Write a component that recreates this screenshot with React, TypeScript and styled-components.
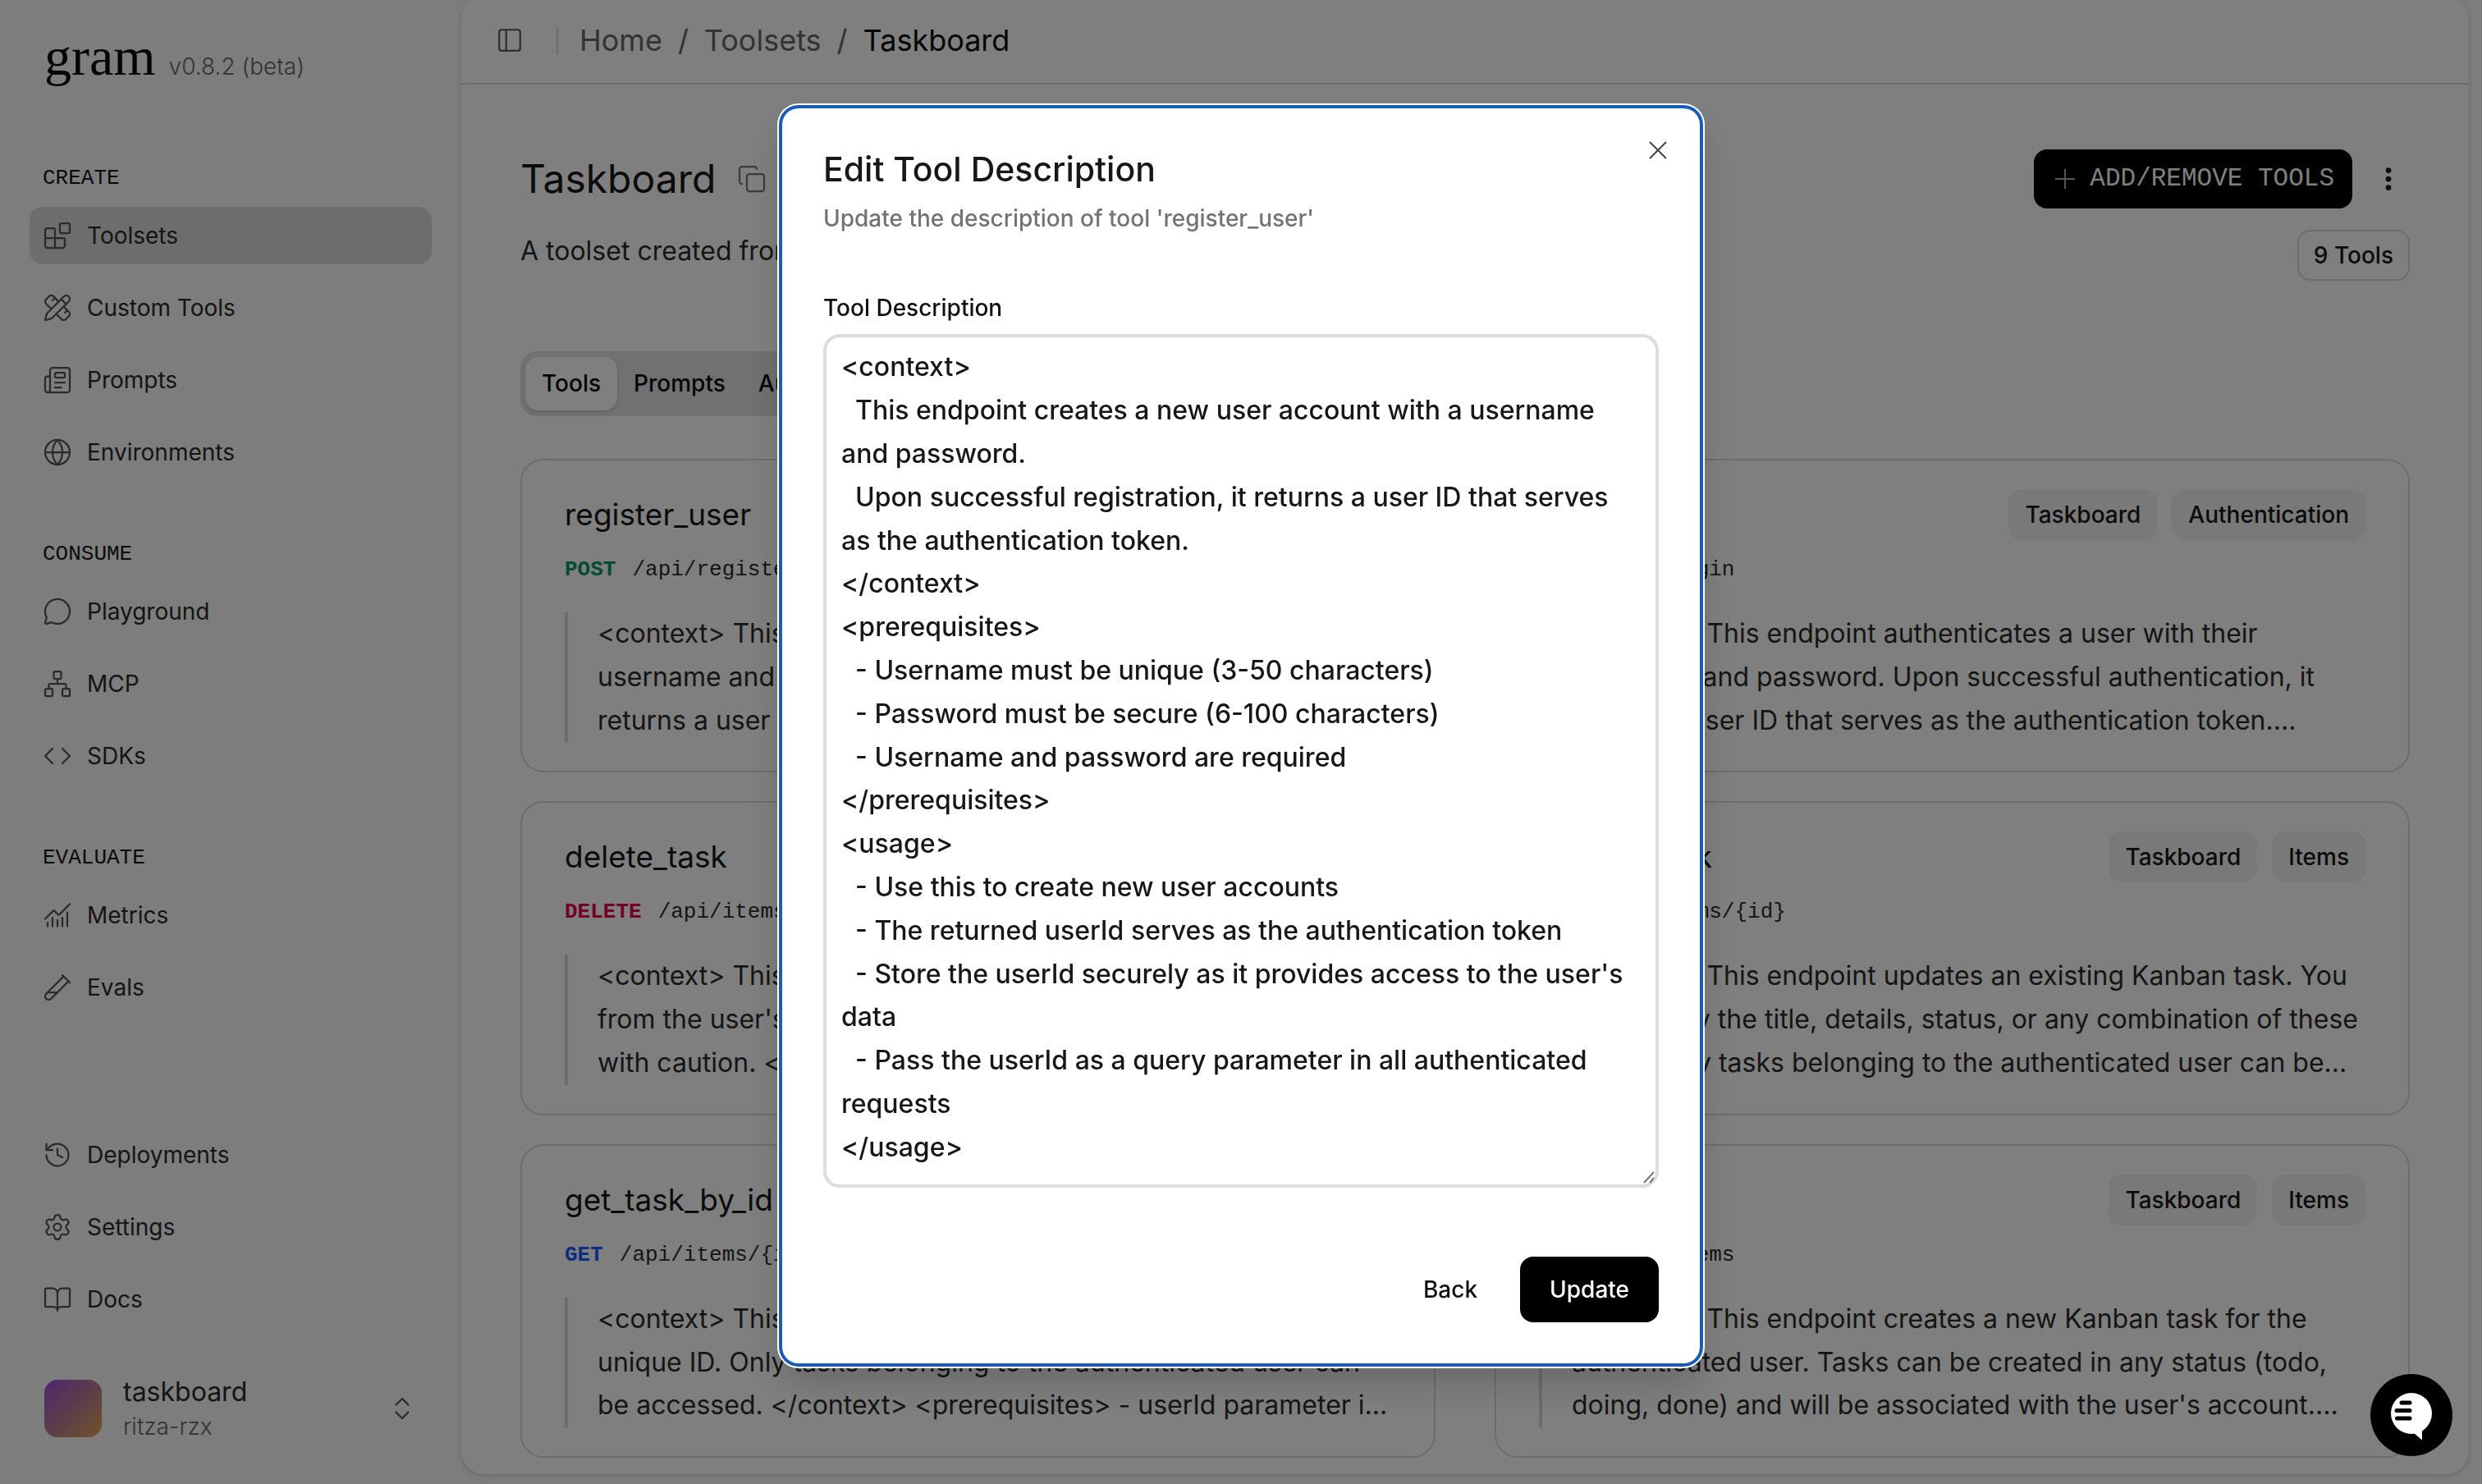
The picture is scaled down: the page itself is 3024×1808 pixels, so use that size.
import React from "react";
import styled, { createGlobalStyle } from "styled-components";
import {
  Blocks, PencilRuler, Newspaper, Globe, MessageCircle, Network, Code, ChartNoAxesCombined,
  TestTubeDiagonal, History, Settings, BookOpen, PanelLeft, Copy, ChevronsUpDown, EllipsisVertical,
} from "lucide-react";

const sans = `Inter, "Liberation Sans", sans-serif`;
const mono = `"Liberation Mono", monospace`;

const Global = createGlobalStyle`
  * { box-sizing: border-box; }
  html, body { margin: 0; height: 100%; overflow: hidden; }
  body { background: #fafafa; color: #171717; font-family: ${sans}; font-size: 28px; }
  #root { height: 100%; }
  h1, h2, h3, p, ul, dl { margin: 0; padding: 0; font-weight: 400; }
  ul { list-style: none; }
  button { font: inherit; color: inherit; border: 0; background: none; padding: 0; cursor: pointer; }
  a { color: inherit; text-decoration: none; }
`;

const Shell = styled.div`
  display: flex;
  height: 100vh;
`;

const Sidebar = styled.aside`
  display: flex;
  flex-direction: column;
  flex: 0 0 562px;
  padding: 30px 36px 50px;
  background: #fafafa;
`;

const Brand = styled.div`
  display: flex;
  align-items: baseline;
  gap: 16px;
  height: 148px;
  padding-left: 18px;
`;

const Logo = styled.span`
  font: 400 66px/78px "Liberation Serif", serif;
  color: #0a0a0a;
`;

const Version = styled.span`
  color: #666;
  font-weight: 300;
`;

const NavGroup = styled.section`
  display: flex;
  flex-direction: column;
  margin-bottom: 50px;
`;

const NavHeading = styled.h2`
  padding: 4px 16px 0;
  font: 400 26px/70px ${mono};
  color: #171717;
`;

const NavList = styled.ul`
  display: flex;
  flex-direction: column;
  gap: 18px;
`;

const NavLink = styled.a<{ $active?: boolean }>`
  display: flex;
  align-items: center;
  gap: 18px;
  height: 70px;
  padding: 0 16px;
  border-radius: 16px;
  background: ${(p) => (p.$active ? "#dadada" : "transparent")};
  color: #2b2b2b;
  svg { color: #555; flex: none; }
`;

const FooterNav = styled.nav`
  margin-top: auto;
`;

const Account = styled.button`
  display: flex;
  align-items: center;
  gap: 26px;
  margin-top: 56px;
  padding: 0 18px;
  text-align: left;
  svg { color: #555; margin-left: auto; }
`;

const Avatar = styled.span`
  width: 70px;
  height: 70px;
  border-radius: 16px;
  background: linear-gradient(135deg, #9b4fd8, #b98090 55%, #e5a550);
`;

const AccountText = styled.span`
  display: flex;
  flex-direction: column;
`;

const AccountName = styled.span`
  font-size: 32px;
  line-height: 44px;
  color: #2b2b2b;
`;

const AccountOrg = styled.span`
  line-height: 40px;
  font-weight: 300;
  color: #666;
`;

const Panel = styled.main`
  flex: 1;
  min-width: 0;
  margin: -4px 16px 12px 0;
  border-radius: 28px;
  background: #fff;
  box-shadow: 0 2px 6px rgba(0, 0, 0, 0.16);
  overflow: hidden;
`;

const TopBar = styled.header`
  display: flex;
  align-items: center;
  height: 107px;
  padding: 0 42px;
  border-bottom: 2px solid #d9d9d9;
  svg { color: #555; }
`;

const Rule = styled.span`
  width: 2px;
  height: 34px;
  margin: 0 26px 0 40px;
  background: #d9d9d9;
`;

const Crumbs = styled.nav`
  display: flex;
  gap: 19px;
  font-size: 36px;
  line-height: 48px;
  color: #666;
`;

const CurrentCrumb = styled.span`
  color: #0a0a0a;
`;

const IconButton = styled.button<{ $size: number }>`
  display: flex;
  align-items: center;
  justify-content: center;
  width: ${(p) => p.$size}px;
  height: ${(p) => p.$size}px;
`;

const Content = styled.div`
  padding: 79px 72px 0;
`;

const TitleRow = styled.div`
  display: flex;
  align-items: center;
  justify-content: space-between;
  height: 72px;
`;

const TitleGroup = styled.div`
  display: flex;
  align-items: center;
  gap: 26px;
  svg { color: #777; }
`;

const Title = styled.h1`
  font-size: 48px;
  line-height: 72px;
`;

const Actions = styled.div`
  display: flex;
  align-items: center;
  gap: 18px;
`;

const AddButton = styled.button`
  display: flex;
  align-items: center;
  gap: 18px;
  height: 72px;
  padding: 0 22px 0 26px;
  border-radius: 16px;
  background: #000;
  color: #fff;
  font: 400 31px/40px ${mono};
  svg { color: #aaa; }
`;

const SubRow = styled.div`
  display: flex;
  align-items: flex-start;
  justify-content: space-between;
  margin-top: 26px;
  height: 148px;
`;

const Summary = styled.p`
  font-size: 32px;
  line-height: 52px;
  color: #2b2b2b;
`;

const Badge = styled.span<{ $outline?: boolean }>`
  padding: 0 18px;
  border: 2px solid ${(p) => (p.$outline ? "#d9d9d9" : "#f2f2f2")};
  border-radius: 16px;
  background: ${(p) => (p.$outline ? "#fff" : "#f2f2f2")};
  color: #171717;
  font-weight: 500;
  line-height: 58px;
`;

const Tabs = styled.div`
  display: inline-flex;
  padding: 7px 6px;
  border-radius: 20px;
  background: #e2e2e2;
`;

const Tab = styled.button<{ $active?: boolean }>`
  padding: 0 20px;
  border-radius: 16px;
  background: ${(p) => (p.$active ? "#fff" : "transparent")};
  box-shadow: ${(p) => (p.$active ? "0 2px 4px rgba(0, 0, 0, 0.15)" : "none")};
  color: #0a0a0a;
  font-weight: 500;
  line-height: 65px;
`;

const CardGrid = styled.div`
  display: grid;
  grid-template-columns: 1fr 1fr;
  gap: 35px 72px;
  margin-top: 52px;
`;

const Card = styled.article`
  min-width: 0;
  padding: 35px 52px;
  border: 2px solid #d9d9d9;
  border-radius: 28px;
`;

const CardHead = styled.div`
  display: flex;
  justify-content: space-between;
`;

const CardTitle = styled.h3`
  font-size: 37px;
  line-height: 62px;
`;

const BadgeRow = styled.div`
  display: flex;
  gap: 18px;
`;

const Endpoint = styled.p`
  display: flex;
  gap: 20px;
  margin: 15px 0 31px;
  font: 400 26px/42px ${mono};
  color: #2b2b2b;
`;

const Method = styled.span<{ $color: string }>`
  font-weight: 700;
  color: ${(p) => p.$color};
`;

const Quote = styled.div`
  padding-left: 36px;
  border-left: 4px solid #d9d9d9;
`;

const QuoteText = styled.p`
  white-space: pre-line;
  font-size: 32px;
  line-height: 1.65;
  color: #2b2b2b;
`;

const Overlay = styled.div`
  position: fixed;
  inset: 0;
  display: flex;
  align-items: center;
  justify-content: center;
  padding-bottom: 15px;
  background: rgba(0, 0, 0, 0.5);
`;

const Dialog = styled.div`
  position: relative;
  display: flex;
  flex-direction: column;
  width: 1118px;
  padding: 50px;
  border-radius: 20px;
  background: #fff;
  box-shadow: 0 0 0 4px #1b5cb8, 0 0 0 6px #fff, 0 24px 44px rgba(0, 0, 0, 0.18);
`;

const CloseButton = styled.button`
  position: absolute;
  top: 32px;
  right: 32px;
  display: flex;
  padding: 8px;
  color: #444;
`;

const DialogTitle = styled.h2`
  font-size: 41px;
  font-weight: 500;
  line-height: 48px;
`;

const DialogHint = styled.p`
  margin-top: 16px;
  font-weight: 500;
  line-height: 40px;
  color: #737373;
`;

const FieldLabel = styled.label`
  margin: 69px 0 12px;
  font-weight: 500;
  line-height: 40px;
  color: #111;
`;

const Field = styled.div`
  position: relative;
  display: flex;
`;

const TextArea = styled.textarea`
  width: 100%;
  padding: 10px 18px 18px;
  border: 4px solid #ddd;
  border-radius: 20px;
  outline: none;
  resize: none;
  overflow: hidden;
  background: #fff;
  color: #171717;
  font-family: ${sans};
  font-size: 32px;
  font-weight: 500;
  line-height: 1.65;
`;

const Grip = styled.svg`
  position: absolute;
  right: 5px;
  bottom: 5px;
  color: #777;
`;

const DialogActions = styled.div`
  display: flex;
  justify-content: flex-end;
  gap: 16px;
  margin-top: 84px;
`;

const DialogButton = styled.button<{ $primary?: boolean }>`
  padding: 0 36px;
  border-radius: 16px;
  background: ${(p) => (p.$primary ? "#000" : "transparent")};
  color: ${(p) => (p.$primary ? "#fff" : "#111")};
  font-weight: 500;
  line-height: 80px;
`;

const ChatButton = styled.button`
  position: fixed;
  right: 36px;
  bottom: 34px;
  width: 100px;
  height: 100px;
  border-radius: 50%;
  background: #000;
  display: flex;
  align-items: center;
  justify-content: center;
`;

const groups = [
  { name: "CREATE", items: [["Toolsets", Blocks], ["Custom Tools", PencilRuler], ["Prompts", Newspaper], ["Environments", Globe]] },
  { name: "CONSUME", items: [["Playground", MessageCircle], ["MCP", Network], ["SDKs", Code]] },
  { name: "EVALUATE", items: [["Metrics", ChartNoAxesCombined], ["Evals", TestTubeDiagonal]] },
] as const;

const footerItems = [["Deployments", History], ["Settings", Settings], ["Docs", BookOpen]] as const;

const GREEN = "#009966";
const PINK = "#e60046";
const BLUE = "#1a5cff";

const tools = [
  { name: "register_user", method: "POST", color: GREEN, path: "/api/register", tags: ["Taskboard", "Authentication"],
    text: "<context> This endpoint creates a new user account with a\nusername and password. Upon successful registration, it\nreturns a user ID that serves as the authentication token...." },
  { name: "login_user", method: "POST", color: GREEN, path: "/api/login", tags: ["Taskboard", "Authentication"],
    text: "<context> This endpoint authenticates a user with their\nusername and password. Upon successful authentication, it\nreturns a user ID that serves as the authentication token...." },
  { name: "delete_task", method: "DELETE", color: PINK, path: "/api/items/{id}", tags: ["Taskboard", "Items"],
    text: "<context> This endpoint permanently deletes a task\nfrom the user's board. This cannot be undone, so use\nwith caution. </context> <prerequisites> - userId para..." },
  { name: "update_task", method: "PUT", color: BLUE, path: "/api/items/{id}", tags: ["Taskboard", "Items"],
    text: "<context> This endpoint updates an existing Kanban task. You\ncan modify the title, details, status, or any combination of these\nfields. Only tasks belonging to the authenticated user can be..." },
  { name: "get_task_by_id", method: "GET", color: BLUE, path: "/api/items/{id}", tags: ["Taskboard", "Items"],
    text: "<context> This endpoint retrieves a specific task by its\nunique ID. Only tasks belonging to the authenticated user can\nbe accessed. </context> <prerequisites> - userId parameter i..." },
  { name: "create_task", method: "POST", color: GREEN, path: "/api/items", tags: ["Taskboard", "Items"],
    text: "<context> This endpoint creates a new Kanban task for the\nauthenticated user. Tasks can be created in any status (todo,\ndoing, done) and will be associated with the user's account...." },
];

const description = `<context>
  This endpoint creates a new user account with a username and password.
  Upon successful registration, it returns a user ID that serves as the authentication token.
</context>
<prerequisites>
  - Username must be unique (3-50 characters)
  - Password must be secure (6-100 characters)
  - Username and password are required
</prerequisites>
<usage>
  - Use this to create new user accounts
  - The returned userId serves as the authentication token
  - Store the userId securely as it provides access to the user's data
  - Pass the userId as a query parameter in all authenticated requests
</usage>`;

export default function App() {
  return (
    <>
      <Global />
      <Shell>
        <Sidebar>
          <Brand>
            <Logo>gram</Logo>
            <Version>v0.8.2 (beta)</Version>
          </Brand>
          {groups.map((g) => (
            <NavGroup key={g.name}>
              <NavHeading>{g.name}</NavHeading>
              <NavList>
                {g.items.map(([label, Icon]) => (
                  <li key={label}>
                    <NavLink href="#" $active={label === "Toolsets"}>
                      <Icon size={36} strokeWidth={1.5} />
                      {label}
                    </NavLink>
                  </li>
                ))}
              </NavList>
            </NavGroup>
          ))}
          <FooterNav>
            <NavList>
              {footerItems.map(([label, Icon]) => (
                <li key={label}>
                  <NavLink href="#">
                    <Icon size={36} strokeWidth={1.5} />
                    {label}
                  </NavLink>
                </li>
              ))}
            </NavList>
          </FooterNav>
          <Account>
            <Avatar />
            <AccountText>
              <AccountName>taskboard</AccountName>
              <AccountOrg>ritza-rzx</AccountOrg>
            </AccountText>
            <ChevronsUpDown size={36} strokeWidth={1.5} />
          </Account>
        </Sidebar>
        <Panel>
          <TopBar>
            <IconButton $size={34} aria-label="Toggle sidebar">
              <PanelLeft size={36} strokeWidth={1.5} />
            </IconButton>
            <Rule />
            <Crumbs aria-label="Breadcrumb">
              <a href="#">Home</a>
              <span>/</span>
              <a href="#">Toolsets</a>
              <span>/</span>
              <CurrentCrumb>Taskboard</CurrentCrumb>
            </Crumbs>
          </TopBar>
          <Content>
            <TitleRow>
              <TitleGroup>
                <Title>Taskboard</Title>
                <IconButton $size={36} aria-label="Copy">
                  <Copy size={38} strokeWidth={1.5} />
                </IconButton>
              </TitleGroup>
              <Actions>
                <AddButton>
                  <svg width="24" height="24" viewBox="0 0 24 24" fill="none" stroke="currentColor" strokeWidth="2">
                    <path d="M12 0v24M0 12h24" />
                  </svg>
                  ADD/REMOVE TOOLS
                </AddButton>
                <IconButton $size={52} aria-label="More">
                  <EllipsisVertical size={36} strokeWidth={2.5} />
                </IconButton>
              </Actions>
            </TitleRow>
            <SubRow>
              <Summary>A toolset created from Taskboard</Summary>
              <Badge $outline>9 Tools</Badge>
            </SubRow>
            <Tabs role="tablist">
              <Tab role="tab" aria-selected $active>Tools</Tab>
              <Tab role="tab">Prompts</Tab>
              <Tab role="tab">Auth</Tab>
            </Tabs>
            <CardGrid>
              {tools.map((t) => (
                <Card key={t.name}>
                  <CardHead>
                    <CardTitle>{t.name}</CardTitle>
                    <BadgeRow>
                      {t.tags.map((tag) => (
                        <Badge key={tag}>{tag}</Badge>
                      ))}
                    </BadgeRow>
                  </CardHead>
                  <Endpoint>
                    <Method $color={t.color}>{t.method}</Method>
                    <span>{t.path}</span>
                  </Endpoint>
                  <Quote>
                    <QuoteText>{t.text}</QuoteText>
                  </Quote>
                </Card>
              ))}
            </CardGrid>
          </Content>
        </Panel>
      </Shell>
      <Overlay>
        <Dialog role="dialog" aria-modal="true" aria-labelledby="dialog-title">
          <CloseButton aria-label="Close">
            <svg width="22" height="22" viewBox="0 0 22 22" fill="none" stroke="currentColor" strokeWidth="2">
              <path d="M1 1l20 20M21 1L1 21" />
            </svg>
          </CloseButton>
          <DialogTitle id="dialog-title">Edit Tool Description</DialogTitle>
          <DialogHint>Update the description of tool 'register_user'</DialogHint>
          <FieldLabel htmlFor="tool-description">Tool Description</FieldLabel>
          <Field>
            <TextArea id="tool-description" rows={19} defaultValue={description} spellCheck={false} />
            <Grip width="14" height="15" viewBox="0 0 14 15" fill="none" stroke="currentColor" strokeWidth="2" aria-hidden>
              <path d="M1 14L13 1M8 14l5-6" />
            </Grip>
          </Field>
          <DialogActions>
            <DialogButton>Back</DialogButton>
            <DialogButton $primary>Update</DialogButton>
          </DialogActions>
        </Dialog>
      </Overlay>
      <ChatButton aria-label="Open chat">
        <svg width="54" height="64" viewBox="0 0 54 64" fill="none">
          <circle cx="27" cy="30" r="25" fill="#fff" />
          <path d="M30 54l10 8.500V48z" fill="#fff" />
          <path d="M15 17h10M9 26.500h16M9.500 36h15.500" stroke="#000" strokeWidth="5" strokeLinecap="round" />
        </svg>
      </ChatButton>
    </>
  );
}
